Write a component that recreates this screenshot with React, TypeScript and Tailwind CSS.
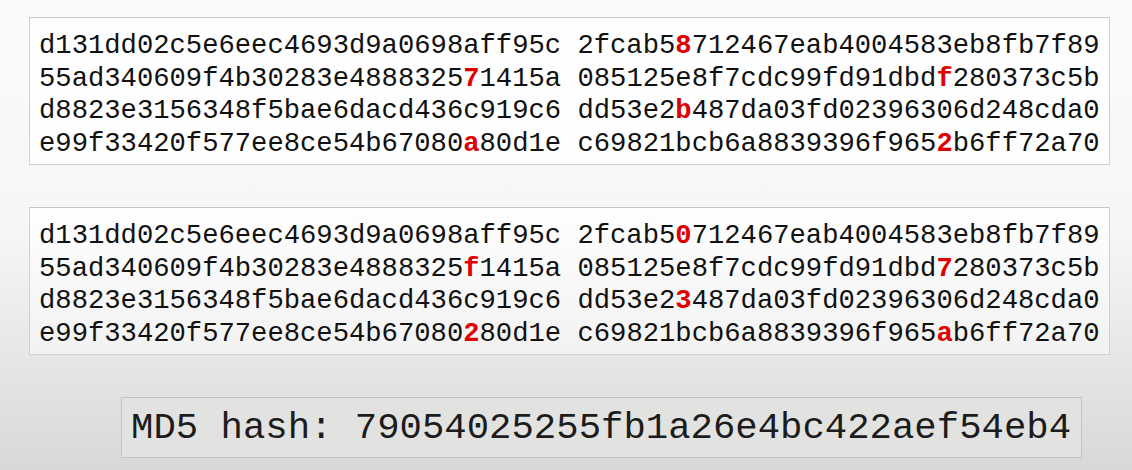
import React from "react";

type Seg = string | { r: string };
const rows1: [Seg[], Seg[]][] = [
  [["d131dd02c5e6eec4693d9a0698aff95c"], ["2fcab5", { r: "8" }, "712467eab4004583eb8fb7f89"]],
  [["55ad340609f4b30283e4888325", { r: "7" }, "1415a"], ["085125e8f7cdc99fd91dbd", { r: "f" }, "280373c5b"]],
  [["d8823e3156348f5bae6dacd436c919c6"], ["dd53e2", { r: "b" }, "487da03fd02396306d248cda0"]],
  [["e99f33420f577ee8ce54b67080", { r: "a" }, "80d1e"], ["c69821bcb6a8839396f965", { r: "2" }, "b6ff72a70"]],
];
const rows2: [Seg[], Seg[]][] = [
  [["d131dd02c5e6eec4693d9a0698aff95c"], ["2fcab5", { r: "0" }, "712467eab4004583eb8fb7f89"]],
  [["55ad340609f4b30283e4888325", { r: "f" }, "1415a"], ["085125e8f7cdc99fd91dbd", { r: "7" }, "280373c5b"]],
  [["d8823e3156348f5bae6dacd436c919c6"], ["dd53e2", { r: "3" }, "487da03fd02396306d248cda0"]],
  [["e99f33420f577ee8ce54b67080", { r: "2" }, "80d1e"], ["c69821bcb6a8839396f965", { r: "a" }, "b6ff72a70"]],
];

function Segs({ segs }: { segs: Seg[] }) {
  return (
    <>
      {segs.map((s, i) =>
        typeof s === "string" ? (
          <span key={i}>{s}</span>
        ) : (
          <span key={i} className="font-bold text-[#e00000]">
            {s.r}
          </span>
        )
      )}
    </>
  );
}

function HashBox({ rows, bg }: { rows: [Seg[], Seg[]][]; bg: string }) {
  return (
    <div
      className={`ml-[29px] w-[1081px] h-[148px] border border-[#cfd0cf] border-t-[#c6c7c6] pl-[9px] pt-[12px] ${bg}`}
    >
      {rows.map(([a, b], i) => (
        <div key={i} className="whitespace-pre text-[27.2px] leading-[32.67px] text-[#111]">
          <Segs segs={a} /> <Segs segs={b} />
        </div>
      ))}
    </div>
  );
}

export default function App() {
  return (
    <div
      className="w-[1132px] h-[470px] overflow-hidden bg-gradient-to-b from-[#fafbfa] via-[#f5f6f5] to-[#d8d9d7] pt-[17px] flex flex-col"
      style={{ fontFamily: '"Liberation Mono", "Courier New", monospace' }}
    >
      <HashBox rows={rows1} bg="bg-[#fefefe]" />
      <div className="h-[42px]" />
      <HashBox rows={rows2} bg="bg-gradient-to-b from-[#fefefe] to-[#f1f2f1]" />
      <div className="h-[42px]" />
      <div className="ml-[121px] w-[961px] h-[61px] border border-[#c2c3c2] bg-[#e2e3e1] pl-[9px] flex items-center">
        <span className="whitespace-pre text-[37.3px] leading-none text-[#1c1c1c] mt-[2px]">
          MD5 hash: 79054025255fb1a26e4bc422aef54eb4
        </span>
      </div>
    </div>
  );
}
